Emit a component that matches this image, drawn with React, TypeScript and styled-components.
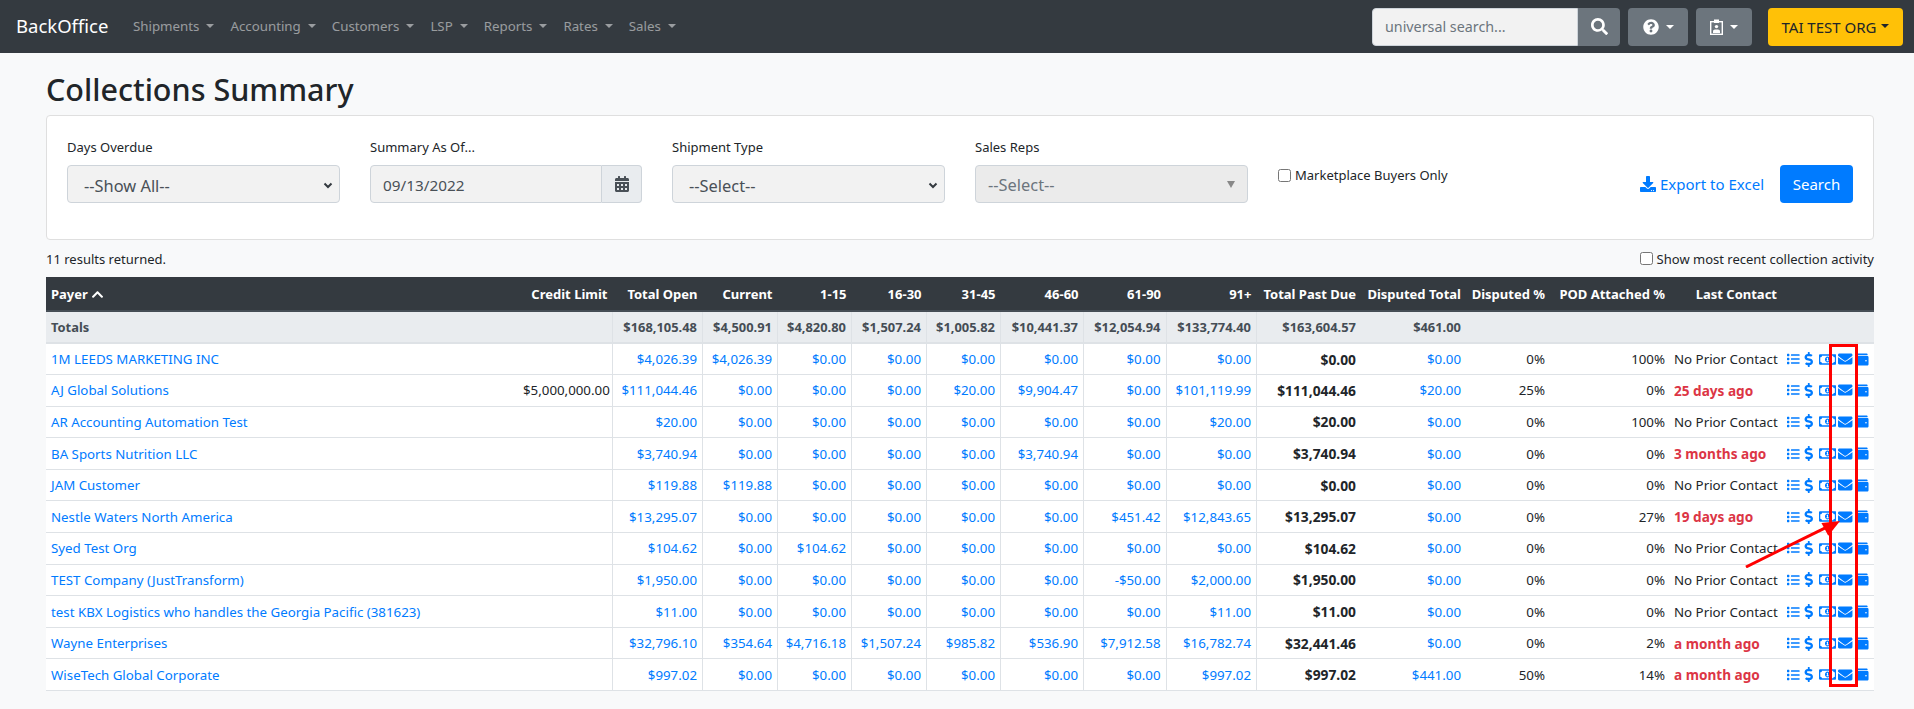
import React from 'react';
import styled, { createGlobalStyle } from 'styled-components';
import {
  FaCalendarAlt,
  FaChevronUp,
  FaDollarSign,
  FaDownload,
  FaEnvelope,
  FaList,
  FaQuestionCircle,
  FaRegMoneyBillAlt,
  FaSearch,
  FaWallet,
} from 'react-icons/fa';

const FONT = '"Noto Sans", "Open Sans", sans-serif';

const GlobalStyle = createGlobalStyle`
  html, body {
    margin: 0;
    padding: 0;
    background: #f8f9fa;
    color: #212529;
    font-family: ${FONT};
    font-size: 13px;
  }
  * { box-sizing: border-box; }
`;

const NAV_ITEMS = ['Shipments', 'Accounting', 'Customers', 'LSP', 'Reports', 'Rates', 'Sales'];

type Row = {
  payer: string;
  credit?: string;
  values: string[];
  pastDue: string;
  disputed: string;
  disputedPct: string;
  pod: string;
  contact: string;
  late?: boolean;
};

const ROWS: Row[] = [
  { payer: '1M LEEDS MARKETING INC', values: ['$4,026.39', '$4,026.39', '$0.00', '$0.00', '$0.00', '$0.00', '$0.00', '$0.00'], pastDue: '$0.00', disputed: '$0.00', disputedPct: '0%', pod: '100%', contact: 'No Prior Contact' },
  { payer: 'AJ Global Solutions', credit: '$5,000,000.00', values: ['$111,044.46', '$0.00', '$0.00', '$0.00', '$20.00', '$9,904.47', '$0.00', '$101,119.99'], pastDue: '$111,044.46', disputed: '$20.00', disputedPct: '25%', pod: '0%', contact: '25 days ago', late: true },
  { payer: 'AR Accounting Automation Test', values: ['$20.00', '$0.00', '$0.00', '$0.00', '$0.00', '$0.00', '$0.00', '$20.00'], pastDue: '$20.00', disputed: '$0.00', disputedPct: '0%', pod: '100%', contact: 'No Prior Contact' },
  { payer: 'BA Sports Nutrition LLC', values: ['$3,740.94', '$0.00', '$0.00', '$0.00', '$0.00', '$3,740.94', '$0.00', '$0.00'], pastDue: '$3,740.94', disputed: '$0.00', disputedPct: '0%', pod: '0%', contact: '3 months ago', late: true },
  { payer: 'JAM Customer', values: ['$119.88', '$119.88', '$0.00', '$0.00', '$0.00', '$0.00', '$0.00', '$0.00'], pastDue: '$0.00', disputed: '$0.00', disputedPct: '0%', pod: '0%', contact: 'No Prior Contact' },
  { payer: 'Nestle Waters North America', values: ['$13,295.07', '$0.00', '$0.00', '$0.00', '$0.00', '$0.00', '$451.42', '$12,843.65'], pastDue: '$13,295.07', disputed: '$0.00', disputedPct: '0%', pod: '27%', contact: '19 days ago', late: true },
  { payer: 'Syed Test Org', values: ['$104.62', '$0.00', '$104.62', '$0.00', '$0.00', '$0.00', '$0.00', '$0.00'], pastDue: '$104.62', disputed: '$0.00', disputedPct: '0%', pod: '0%', contact: 'No Prior Contact' },
  { payer: 'TEST Company (JustTransform)', values: ['$1,950.00', '$0.00', '$0.00', '$0.00', '$0.00', '$0.00', '-$50.00', '$2,000.00'], pastDue: '$1,950.00', disputed: '$0.00', disputedPct: '0%', pod: '0%', contact: 'No Prior Contact' },
  { payer: 'test KBX Logistics who handles the Georgia Pacific (381623)', values: ['$11.00', '$0.00', '$0.00', '$0.00', '$0.00', '$0.00', '$0.00', '$11.00'], pastDue: '$11.00', disputed: '$0.00', disputedPct: '0%', pod: '0%', contact: 'No Prior Contact' },
  { payer: 'Wayne Enterprises', values: ['$32,796.10', '$354.64', '$4,716.18', '$1,507.24', '$985.82', '$536.90', '$7,912.58', '$16,782.74'], pastDue: '$32,441.46', disputed: '$0.00', disputedPct: '0%', pod: '2%', contact: 'a month ago', late: true },
  { payer: 'WiseTech Global Corporate', values: ['$997.02', '$0.00', '$0.00', '$0.00', '$0.00', '$0.00', '$0.00', '$997.02'], pastDue: '$997.02', disputed: '$441.00', disputedPct: '50%', pod: '14%', contact: 'a month ago', late: true },
];

const TOTALS = ['$168,105.48', '$4,500.91', '$4,820.80', '$1,507.24', '$1,005.82', '$10,441.37', '$12,054.94', '$133,774.40', '$163,604.57', '$461.00'];
const HEADERS = ['Total Open', 'Current', '1-15', '16-30', '31-45', '46-60', '61-90', '91+', 'Total Past Due', 'Disputed Total', 'Disputed %', 'POD Attached %', 'Last Contact'];
const COL_WIDTHS = [472, 94.5, 90, 75, 74, 75, 74, 83, 82.5, 90.5, 104.5, 105, 84, 120, 112, 92];

const ClipboardUser = () => (
  <svg width="13" height="16" viewBox="0 0 13 16" aria-hidden="true">
    <rect x="0.7" y="2.7" width="11.6" height="12.6" fill="none" stroke="#fff" strokeWidth="1.4" />
    <rect x="4" y="0.5" width="5" height="3.5" fill="#fff" />
    <circle cx="6.5" cy="7.6" r="1.7" fill="#fff" />
    <path d="M3 14v-1.6c0-1.2 1-1.9 2-1.9h3c1 0 2 .7 2 1.9V14z" fill="#fff" />
  </svg>
);

const App: React.FC = () => (
  <>
    <GlobalStyle />
    <Navbar>
      <Brand>BackOffice</Brand>
      <NavList>
        {NAV_ITEMS.map(item => (
          <NavItem key={item}>
            {item}
            <Caret />
          </NavItem>
        ))}
      </NavList>
      <NavTools>
        <SearchGroup>
          <SearchInput placeholder="universal search..." />
          <SearchButton><FaSearch size={17} /></SearchButton>
        </SearchGroup>
        <ToolButton $width={60}><FaQuestionCircle size={16} /><Caret $light /></ToolButton>
        <ToolButton $width={56}><ClipboardUser /><Caret $light /></ToolButton>
        <OrgButton>TAI TEST ORG<OrgCaret /></OrgButton>
      </NavTools>
    </Navbar>

    <Page>
      <Title>Collections Summary</Title>
      <FilterCard>
        <Field $width={273} $gap={30}>
          <FieldLabel>Days Overdue</FieldLabel>
          <SelectBox>--Show All--<Chevron viewBox="0 0 10 10"><path d="M1.5 3.5 L5 7 L8.5 3.5" /></Chevron></SelectBox>
        </Field>
        <Field $width={272} $gap={30}>
          <FieldLabel>Summary As Of...</FieldLabel>
          <DateGroup>
            <DateValue>09/13/2022</DateValue>
            <DateAddon><FaCalendarAlt size={16} /></DateAddon>
          </DateGroup>
        </Field>
        <Field $width={273} $gap={30}>
          <FieldLabel>Shipment Type</FieldLabel>
          <SelectBox>--Select--<Chevron viewBox="0 0 10 10"><path d="M1.5 3.5 L5 7 L8.5 3.5" /></Chevron></SelectBox>
        </Field>
        <Field $width={273} $gap={30}>
          <FieldLabel>Sales Reps</FieldLabel>
          <DisabledSelect>--Select--<SmallArrow /></DisabledSelect>
        </Field>
        <CheckLabel><input type="checkbox" />Marketplace Buyers Only</CheckLabel>
        <FilterActions>
          <ExportLink><FaDownload size={16} />Export to Excel</ExportLink>
          <SearchAction>Search</SearchAction>
        </FilterActions>
      </FilterCard>

      <ResultBar>
        <span>11 results returned.</span>
        <RecentLabel><input type="checkbox" />Show most recent collection activity</RecentLabel>
      </ResultBar>

      <TableWrap>
        <Table>
          <colgroup>
            {COL_WIDTHS.map((w, i) => <col key={i} style={{ width: w }} />)}
          </colgroup>
          <thead>
            <tr>
              <HeadCell $left>Payer <SortIcon size={13} /></HeadCell>
              <HeadCell>Credit Limit</HeadCell>
              {HEADERS.map(h => <HeadCell key={h}>{h}</HeadCell>)}
              <HeadCell />
            </tr>
          </thead>
          <tbody>
            <tr>
              <TotalCell $left>Totals</TotalCell>
              <TotalCell />
              {TOTALS.map((t, i) => <TotalCell key={i} $line={i < 9}>{t}</TotalCell>)}
              <TotalCell />
              <TotalCell />
              <TotalCell />
              <TotalCell />
            </tr>
            {ROWS.map(row => (
              <tr key={row.payer}>
                <Cell $left><Link>{row.payer}</Link></Cell>
                <Cell>{row.credit}</Cell>
                {row.values.map((v, i) => <Cell key={i} $line><Link>{v}</Link></Cell>)}
                <Cell $line><Strong>{row.pastDue}</Strong></Cell>
                <Cell><Link>{row.disputed}</Link></Cell>
                <Cell>{row.disputedPct}</Cell>
                <Cell>{row.pod}</Cell>
                <ContactCell $left>{row.late ? <Late>{row.contact}</Late> : row.contact}</ContactCell>
                <Cell $left>
                  <Actions>
                    <FaList size={14} />
                    <FaDollarSign size={15} />
                    <FaRegMoneyBillAlt size={19} />
                    <FaEnvelope size={16} />
                    <FaWallet size={15} />
                  </Actions>
                </Cell>
              </tr>
            ))}
          </tbody>
        </Table>
        <RedBox />
        <RedArrow viewBox="0 0 100 50">
          <line x1="2" y1="49" x2="85" y2="8" stroke="#ff0000" strokeWidth="3" />
          <polygon points="98,2 79,4 86,17" fill="#ff0000" />
        </RedArrow>
      </TableWrap>
    </Page>
  </>
);

const Navbar = styled.nav`
  display: flex;
  align-items: center;
  height: 53px;
  padding: 0 11px 0 16px;
  background: #343a40;
`;

const Brand = styled.a`
  color: #fff;
  font-size: 18.5px;
  margin-right: 24.5px;
  padding-bottom: 2px;
`;

const NavList = styled.div`
  display: flex;
  gap: 16px;
`;

const NavItem = styled.a`
  display: flex;
  align-items: center;
  padding-bottom: 2px;
  color: rgba(255, 255, 255, 0.5);
  font-size: 13.3px;
`;

const Caret = styled.span<{ $light?: boolean }>`
  display: inline-block;
  margin-left: 7px;
  border-top: 4.5px solid ${p => (p.$light ? '#fff' : 'rgba(255, 255, 255, 0.5)')};
  border-left: 4.5px solid transparent;
  border-right: 4.5px solid transparent;
`;

const OrgCaret = styled.span`
  display: inline-block;
  margin-left: 5px;
  margin-bottom: 2px;
  border-top: 4.5px solid #212529;
  border-left: 4.5px solid transparent;
  border-right: 4.5px solid transparent;
`;

const NavTools = styled.div`
  display: flex;
  align-items: center;
  margin-left: auto;
`;

const SearchGroup = styled.div`
  display: flex;
  width: 248px;
  height: 38px;
  margin-right: 8px;
`;

const SearchInput = styled.input`
  flex: 1;
  min-width: 0;
  padding: 0 12px;
  border: 1px solid #ced4da;
  border-radius: 4px 0 0 4px;
  background: #f2f2f2;
  font-family: ${FONT};
  font-size: 14.3px;
  &::placeholder { color: #6c757d; opacity: 1; }
`;

const SearchButton = styled.div`
  display: flex;
  align-items: center;
  justify-content: center;
  width: 42px;
  border-radius: 0 4px 4px 0;
  background: #6c757d;
  color: #fff;
`;

const ToolButton = styled.div<{ $width: number }>`
  display: flex;
  align-items: center;
  justify-content: center;
  width: ${p => p.$width}px;
  height: 38px;
  margin-right: 8px;
  border-radius: 4px;
  background: #6c757d;
  color: #fff;
`;

const OrgButton = styled.div`
  display: flex;
  align-items: center;
  justify-content: center;
  width: 135px;
  height: 38px;
  margin-left: 8px;
  border-radius: 4px;
  background: #ffc107;
  color: #212529;
  font-size: 15px;
  white-space: nowrap;
`;

const Page = styled.main`
  padding: 0 40px 18px 46px;
`;

const Title = styled.h2`
  margin: 0;
  padding-top: 17px;
  height: 62px;
  font-size: 30.5px;
  font-weight: 500;
  line-height: 38px;
`;

const FilterCard = styled.section`
  display: flex;
  align-items: flex-start;
  height: 125px;
  padding: 21px 20px 0;
  background: #fff;
  border: 1px solid #dfdfdf;
  border-radius: 4px;
`;

const Field = styled.div<{ $width: number; $gap: number }>`
  width: ${p => p.$width}px;
  margin-right: ${p => p.$gap}px;
  flex: none;
`;

const FieldLabel = styled.label`
  display: block;
  height: 28px;
  font-size: 13px;
  line-height: 20px;
`;

const SelectBox = styled.div`
  display: flex;
  align-items: center;
  justify-content: space-between;
  height: 38px;
  padding: 2px 6px 0 16px;
  background: #f2f2f2;
  border: 1px solid #ced4da;
  border-radius: 4px;
  color: #495057;
  font-size: 16.4px;
`;

const Chevron = styled.svg`
  width: 10px;
  height: 10px;
  path {
    fill: none;
    stroke: #343a40;
    stroke-width: 2;
  }
`;

const DisabledSelect = styled(SelectBox)`
  padding: 0 12px;
  background: #ebebeb;
  color: #6c757d;
`;

const SmallArrow = styled.span`
  border-top: 7px solid #888;
  border-left: 4px solid transparent;
  border-right: 4px solid transparent;
`;

const DateGroup = styled.div`
  display: flex;
  height: 38px;
`;

const DateValue = styled.div`
  flex: 1;
  display: flex;
  align-items: center;
  padding: 2px 12px 0;
  background: #f2f2f2;
  border: 1px solid #ced4da;
  border-radius: 4px 0 0 4px;
  color: #495057;
  font-size: 15.3px;
`;

const DateAddon = styled.div`
  display: flex;
  align-items: center;
  justify-content: center;
  width: 40px;
  background: #e9ecef;
  border: 1px solid #ced4da;
  border-left: 0;
  border-radius: 0 4px 4px 0;
  color: #495057;
`;

const CheckLabel = styled.label`
  display: flex;
  align-items: center;
  margin-top: 29px;
  gap: 4px;
  font-size: 13px;
  white-space: nowrap;
  input { margin: 0; width: 13px; height: 13px; }
`;

const FilterActions = styled.div`
  display: flex;
  align-items: center;
  gap: 16px;
  margin-left: auto;
  margin-top: 28px;
`;

const ExportLink = styled.a`
  display: flex;
  align-items: center;
  gap: 4px;
  color: #007bff;
  font-size: 15px;
`;

const SearchAction = styled.button`
  width: 73px;
  height: 38px;
  border: 0;
  border-radius: 4px;
  background: #007bff;
  color: #fff;
  font-family: ${FONT};
  font-size: 15px;
`;

const ResultBar = styled.div`
  display: flex;
  align-items: center;
  justify-content: space-between;
  height: 37px;
  font-size: 13px;
`;

const RecentLabel = styled.label`
  display: flex;
  align-items: center;
  gap: 4px;
  input { margin: 0; width: 13px; height: 13px; }
`;

const TableWrap = styled.div`
  position: relative;
`;

const Table = styled.table`
  width: 100%;
  table-layout: fixed;
  border-collapse: collapse;
  background: #fff;
  font-size: 13.3px;
`;

const HeadCell = styled.th<{ $left?: boolean }>`
  height: 34px;
  padding: 0 5px;
  background: #343a40;
  border-bottom: 2px solid #454d55;
  color: #fff;
  font-size: 13px;
  font-weight: 700;
  white-space: nowrap;
  text-align: ${p => (p.$left ? 'left' : 'right')};
`;

const TotalCell = styled.td<{ $left?: boolean; $line?: boolean }>`
  height: 32px;
  padding: 0 5px;
  background: #e9ecef;
  border-bottom: 2px solid #dee2e6;
  border-left: ${p => (p.$line ? '1px solid #dee2e6' : '0')};
  color: #454d55;
  font-size: 12.9px;
  font-weight: 700;
  white-space: nowrap;
  text-align: ${p => (p.$left ? 'left' : 'right')};
`;

const Cell = styled.td<{ $left?: boolean; $line?: boolean }>`
  height: 31.6px;
  padding: 0 5px;
  border-bottom: 1px solid #dee2e6;
  border-left: ${p => (p.$line ? '1px solid #dee2e6' : '0')};
  white-space: nowrap;
  text-align: ${p => (p.$left ? 'left' : 'right')};
`;

const ContactCell = styled(Cell)`
  padding-left: 4px;
`;

const Link = styled.a`
  color: #007bff;
`;

const Strong = styled.strong`
  font-size: 13.8px;
`;

const Late = styled.span`
  color: #dc3545;
  font-size: 13.6px;
  font-weight: 700;
`;

const Actions = styled.div`
  display: flex;
  align-items: center;
  gap: 2.7px;
  color: #007bff;
`;

const SortIcon = styled(FaChevronUp)`
  vertical-align: -2px;
`;

const RedBox = styled.div`
  position: absolute;
  left: 1783px;
  top: 67px;
  width: 29px;
  height: 343px;
  border: 3px solid #ff0000;
  pointer-events: none;
`;

const RedArrow = styled.svg`
  position: absolute;
  left: 1698px;
  top: 242px;
  width: 98px;
  height: 49px;
  pointer-events: none;
`;

export default App;
